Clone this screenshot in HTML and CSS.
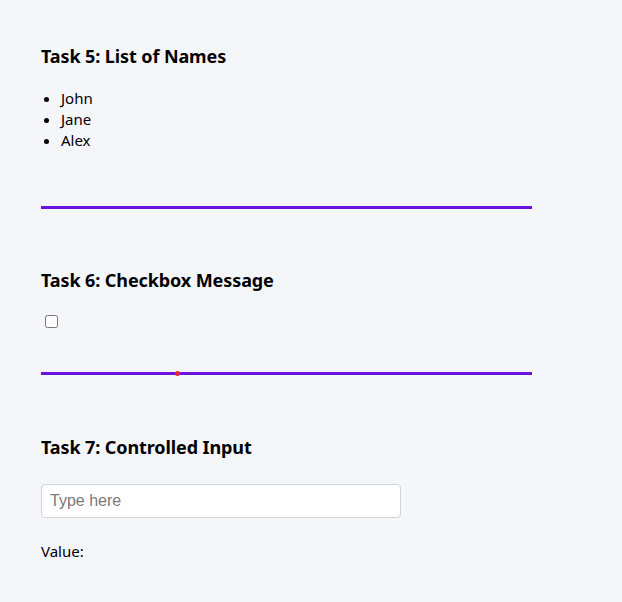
FILE: index.html
```html
<!DOCTYPE html>
<html>
<head>
<meta charset="utf-8">
<link rel="stylesheet" href="styles.css">
</head>
<body>
<main class="page">
  <section class="task">
    <h3 class="title">Task 5: List of Names</h3>
    <ul class="names">
      <li>John</li>
      <li>Jane</li>
      <li>Alex</li>
    </ul>
  </section>
  <hr class="rule">
  <section class="task">
    <h3 class="title">Task 6: Checkbox Message</h3>
    <div class="check-row"><input type="checkbox" class="check"></div>
  </section>
  <div class="rule-wrap">
    <hr class="rule rule-last">
    <span class="dot"></span>
  </div>
  <section class="task">
    <h3 class="title">Task 7: Controlled Input</h3>
    <input type="text" class="field" placeholder="Type here">
    <p class="value">Value: </p>
  </section>
</main>
</body>
</html>
```
FILE: styles.css
```css
html, body {
  margin: 0;
  padding: 0;
  background: #f5f6fa;
}
body {
  font-family: "Noto Sans", "Open Sans", sans-serif;
  color: #000;
  font-size: 15px;
}
.page {
  padding: 44px 0 0 41px;
  width: 491px;
}
.title {
  margin: 0;
  font-size: 18px;
  line-height: 24px;
  font-weight: 700;
  letter-spacing: -0.1px;
}
.names {
  margin: 20px 0 0;
  padding-left: 20px;
  line-height: 21px;
}
.rule {
  border: none;
  height: 3px;
  background: #6a12de;
  margin: 55px 0 59px;
}
.rule-wrap {
  position: relative;
}
.rule-last {
  margin-top: 41px;
  margin-bottom: 60px;
}
.dot {
  position: absolute;
  left: 134px;
  top: -1px;
  width: 5px;
  height: 5px;
  border-radius: 50%;
  background: #e8242a;
}
.check-row {
  margin-top: 20px;
  height: 19px;
}
.check {
  margin: 3px 3px 3px 4px;
  width: 13px;
  height: 13px;
}
.field {
  display: block;
  margin-top: 25px;
  box-sizing: border-box;
  width: 360px;
  height: 34px;
  padding: 0 8px;
  border: 1px solid #cfd3da;
  border-radius: 4px;
  background: #fff;
  font-family: "Liberation Sans", Arial, sans-serif;
  font-size: 16px;
}
.field::placeholder {
  color: #7a7a7a;
}
.value {
  margin: 23px 0 0;
  line-height: 21px;
}
```
